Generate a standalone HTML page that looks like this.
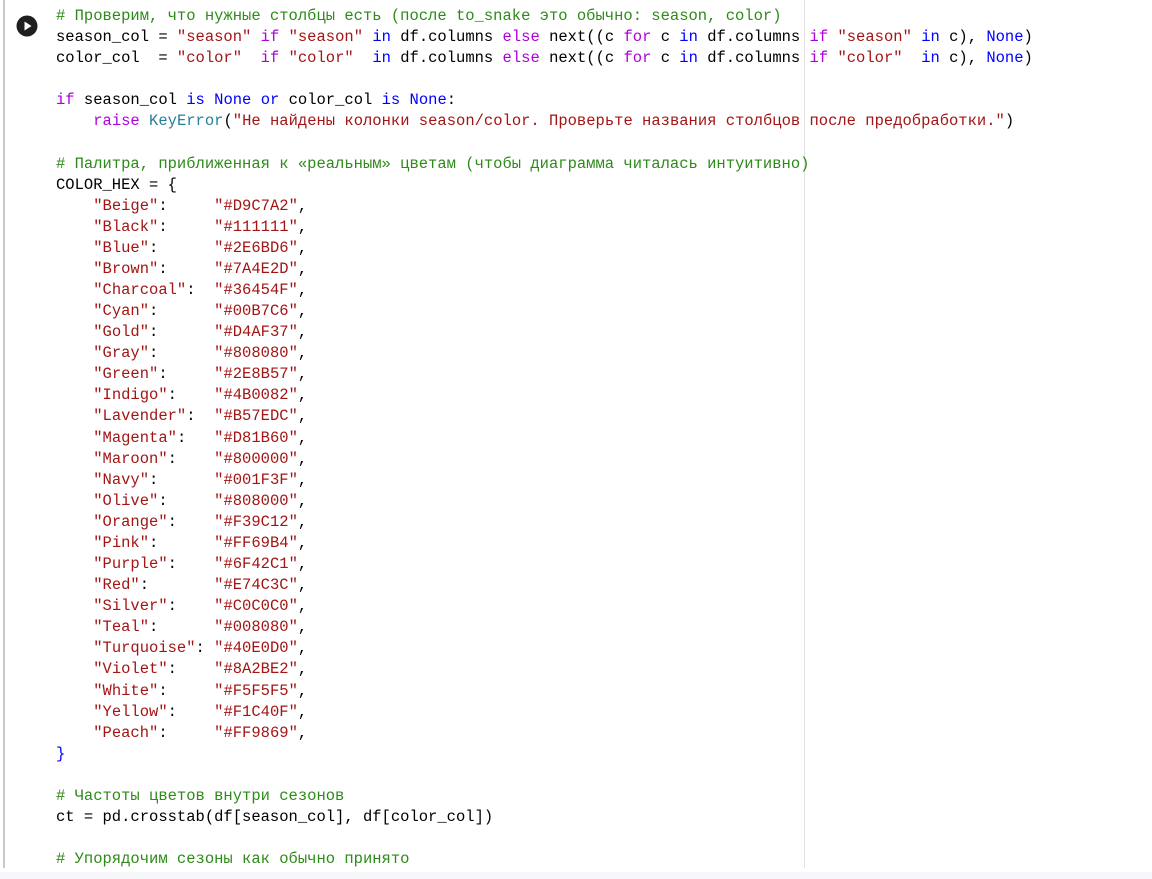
<!DOCTYPE html>
<html><head><meta charset="utf-8"><style>
html,body{margin:0;padding:0;background:#fff;width:1152px;height:879px;overflow:hidden}
.cell{position:absolute;left:0;top:0;width:1152px;height:870px;background:#fff}
.bar{position:absolute;left:3px;top:0;width:2px;height:868px;background:#c8c8c8}
.ruler{position:absolute;left:804px;top:0;width:1px;height:868px;background:#e2e2e2}
.foot{position:absolute;left:0;top:872px;width:1152px;height:7px;background:#f6f7fa}
pre{position:absolute;left:56px;top:6px;margin:0;font-family:"Liberation Mono","DejaVu Sans Mono",monospace;font-size:15.5px;line-height:21.08px;color:#000;letter-spacing:0}
.c{color:#2e8a1a}.s{color:#a31515}.k{color:#af00db}.b{color:#0000ff}.t{color:#267f99}
.play{position:absolute;left:16px;top:15px}
</style></head><body>
<div class="cell"></div><div class="bar"></div><div class="ruler"></div><div class="foot"></div>
<svg class="play" width="22" height="22" viewBox="0 0 22 22"><circle cx="11" cy="11" r="10.5" fill="#1f1f1f"/><path d="M8.5 6.5 L15.5 11 L8.5 15.5 Z" fill="#fff"/></svg>
<pre><span class="c"># Проверим, что нужные столбцы есть (после to_snake это обычно: season, color)</span>
season_col = <span class="s">"season"</span> <span class="k">if</span> <span class="s">"season"</span> <span class="b">in</span> df.columns <span class="k">else</span> next((c <span class="k">for</span> c <span class="b">in</span> df.columns <span class="k">if</span> <span class="s">"season"</span> <span class="b">in</span> c), <span class="b">None</span>)
color_col  = <span class="s">"color"</span>  <span class="k">if</span> <span class="s">"color"</span>  <span class="b">in</span> df.columns <span class="k">else</span> next((c <span class="k">for</span> c <span class="b">in</span> df.columns <span class="k">if</span> <span class="s">"color"</span>  <span class="b">in</span> c), <span class="b">None</span>)

<span class="k">if</span> season_col <span class="b">is</span> <span class="b">None</span> <span class="b">or</span> color_col <span class="b">is</span> <span class="b">None</span>:
    <span class="k">raise</span> <span class="t">KeyError</span>(<span class="s">"Не найдены колонки season/color. Проверьте названия столбцов после предобработки."</span>)

<span class="c"># Палитра, приближенная к «реальным» цветам (чтобы диаграмма читалась интуитивно)</span>
COLOR_HEX = {
    <span class="s">"Beige"</span>:     <span class="s">"#D9C7A2"</span>,
    <span class="s">"Black"</span>:     <span class="s">"#111111"</span>,
    <span class="s">"Blue"</span>:      <span class="s">"#2E6BD6"</span>,
    <span class="s">"Brown"</span>:     <span class="s">"#7A4E2D"</span>,
    <span class="s">"Charcoal"</span>:  <span class="s">"#36454F"</span>,
    <span class="s">"Cyan"</span>:      <span class="s">"#00B7C6"</span>,
    <span class="s">"Gold"</span>:      <span class="s">"#D4AF37"</span>,
    <span class="s">"Gray"</span>:      <span class="s">"#808080"</span>,
    <span class="s">"Green"</span>:     <span class="s">"#2E8B57"</span>,
    <span class="s">"Indigo"</span>:    <span class="s">"#4B0082"</span>,
    <span class="s">"Lavender"</span>:  <span class="s">"#B57EDC"</span>,
    <span class="s">"Magenta"</span>:   <span class="s">"#D81B60"</span>,
    <span class="s">"Maroon"</span>:    <span class="s">"#800000"</span>,
    <span class="s">"Navy"</span>:      <span class="s">"#001F3F"</span>,
    <span class="s">"Olive"</span>:     <span class="s">"#808000"</span>,
    <span class="s">"Orange"</span>:    <span class="s">"#F39C12"</span>,
    <span class="s">"Pink"</span>:      <span class="s">"#FF69B4"</span>,
    <span class="s">"Purple"</span>:    <span class="s">"#6F42C1"</span>,
    <span class="s">"Red"</span>:       <span class="s">"#E74C3C"</span>,
    <span class="s">"Silver"</span>:    <span class="s">"#C0C0C0"</span>,
    <span class="s">"Teal"</span>:      <span class="s">"#008080"</span>,
    <span class="s">"Turquoise"</span>: <span class="s">"#40E0D0"</span>,
    <span class="s">"Violet"</span>:    <span class="s">"#8A2BE2"</span>,
    <span class="s">"White"</span>:     <span class="s">"#F5F5F5"</span>,
    <span class="s">"Yellow"</span>:    <span class="s">"#F1C40F"</span>,
    <span class="s">"Peach"</span>:     <span class="s">"#FF9869"</span>,
<span class="b">}</span>

<span class="c"># Частоты цветов внутри сезонов</span>
ct = pd.crosstab(df[season_col], df[color_col])

<span class="c"># Упорядочим сезоны как обычно принято</span></pre>
</body></html>
